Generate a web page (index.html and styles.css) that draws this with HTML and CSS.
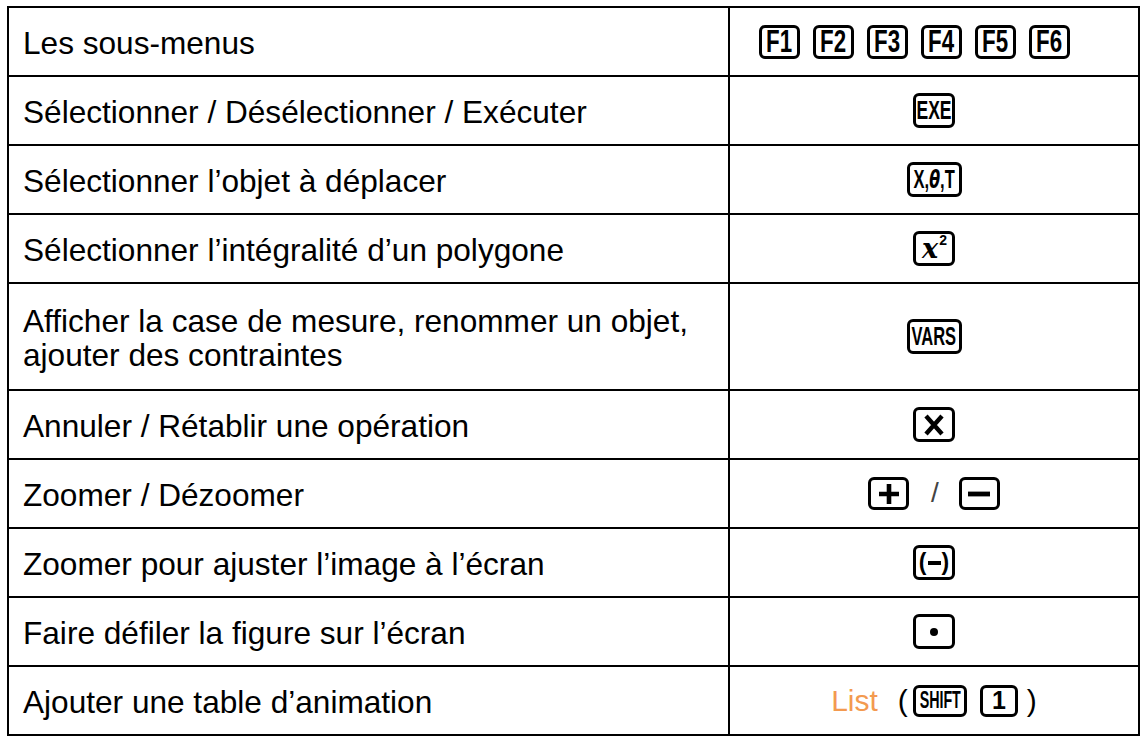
FILE: index.html
```html
<!DOCTYPE html>
<html lang="fr">
<head>
<meta charset="utf-8">
<title>Touches</title>
<link rel="stylesheet" href="styles.css">
</head>
<body>
<div class="table">
  <div class="cell label">Les sous-menus</div>
  <div class="cell keys">
    <div class="fgroup">
      <span class="key fkey"><span class="kt">F1</span></span>
      <span class="key fkey"><span class="kt">F2</span></span>
      <span class="key fkey"><span class="kt">F3</span></span>
      <span class="key fkey"><span class="kt">F4</span></span>
      <span class="key fkey"><span class="kt">F5</span></span>
      <span class="key fkey"><span class="kt">F6</span></span>
    </div>
  </div>

  <div class="cell label">Sélectionner / Désélectionner / Exécuter</div>
  <div class="cell keys"><span class="key small"><span class="kt">EXE</span></span></div>

  <div class="cell label">Sélectionner l’objet à déplacer</div>
  <div class="cell keys"><span class="key wide"><span class="kt">X,<i class="theta">θ</i>,T</span></span></div>

  <div class="cell label">Sélectionner l’intégralité d’un polygone</div>
  <div class="cell keys"><span class="key small"><span class="xsq"><i>x</i><sup>2</sup></span></span></div>

  <div class="cell label tall">Afficher la case de mesure, renommer un objet,<br>ajouter des contraintes</div>
  <div class="cell keys tall"><span class="key wide"><span class="kt">VARS</span></span></div>

  <div class="cell label">Annuler / Rétablir une opération</div>
  <div class="cell keys"><span class="key small">
    <svg width="26" height="24" viewBox="0 0 26 24"><path d="M5 3 L21 21 M21 3 L5 21" stroke="#000" stroke-width="4.4" stroke-linecap="butt"/></svg>
  </span></div>

  <div class="cell label">Zoomer / Dézoomer</div>
  <div class="cell keys pm">
    <span class="key small">
      <svg width="26" height="24" viewBox="0 0 26 24"><path d="M3 12 H23 M13 2 V22" stroke="#000" stroke-width="4.6"/></svg>
    </span>
    <span class="slash">/</span>
    <span class="key small">
      <svg width="28" height="24" viewBox="0 0 28 24"><path d="M3 12 H25" stroke="#000" stroke-width="4.8"/></svg>
    </span>
  </div>

  <div class="cell label">Zoomer pour ajuster l’image à l’écran</div>
  <div class="cell keys"><span class="key small"><span class="neg">(<span class="bar"></span>)</span></span></div>

  <div class="cell label">Faire défiler la figure sur l’écran</div>
  <div class="cell keys"><span class="key small"><span class="dot"></span></span></div>

  <div class="cell label">Ajouter une table d’animation</div>
  <div class="cell keys list">
    <span class="orange">List</span>
    <span class="paren open">(</span>
    <span class="key shift"><span class="kt">SHIFT</span></span>
    <span class="key one"><span class="kt">1</span></span>
    <span class="paren">)</span>
  </div>
</div>
</body>
</html>
```

FILE: styles.css
```css
html, body {
  margin: 0;
  padding: 0;
  background: #fff;
}

body {
  padding: 6px 0 0 7px;
  font-family: "Liberation Sans", Arial, sans-serif;
  color: #000;
}

.table {
  display: grid;
  grid-template-columns: 721px 410px;
  grid-template-rows: repeat(4, 69px) 107px repeat(5, 69px);
  border-left: 2px solid #000;
  border-top: 2px solid #000;
  width: 1131px;
}

.cell {
  box-sizing: border-box;
  border-right: 2px solid #000;
  border-bottom: 2px solid #000;
  display: flex;
  align-items: center;
}

.label {
  padding-left: 14px;
  font-size: 31.6px;
  line-height: 34px;
  padding-top: 2px;
}

.keys {
  justify-content: center;
}

.fgroup {
  display: flex;
  gap: 13px;
  margin-right: 40px;
}

.key {
  box-sizing: border-box;
  display: inline-flex;
  align-items: center;
  justify-content: center;
  border: 3px solid #000;
  border-radius: 6px;
  height: 35px;
  background: #fff;
}

.kt {
  display: inline-block;
  font-weight: bold;
  font-size: 25px;
  transform: scaleX(0.7);
  white-space: nowrap;
  line-height: 1;
}

.fkey {
  width: 41px;
  height: 34px;
}

.fkey .kt {
  font-size: 31px;
  transform: scaleX(0.72);
}

.small {
  width: 42px;
}

.wide {
  width: 55px;
}

.wide .kt {
  transform: scaleX(0.66);
}

.theta {
  font-style: italic;
  font-family: "DejaVu Sans", sans-serif;
  font-size: 24px;
}

.xsq {
  font-family: "DejaVu Serif", "Liberation Serif", serif;
  display: inline-flex;
  align-items: flex-start;
  margin-left: 1px;
}

.xsq i {
  font-size: 27px;
  line-height: 1;
  font-weight: bold;
}

.xsq sup {
  font-family: "Liberation Sans", sans-serif;
  font-weight: bold;
  font-size: 14px;
  line-height: 1;
  vertical-align: baseline;
  margin-left: 1px;
  margin-top: -2px;
}

.pm .key {
  width: 41px;
  height: 33px;
}

.slash {
  font-size: 28px;
  color: #444;
  margin: 0 20px 0 22px;
  padding-bottom: 2px;
}

.neg {
  display: inline-flex;
  align-items: center;
  font-weight: bold;
  font-size: 23px;
  line-height: 1;
}

.bar {
  display: inline-block;
  width: 13px;
  height: 4px;
  background: #000;
  margin: 0 1px;
}

.dot {
  width: 8px;
  height: 8px;
  border-radius: 50%;
  background: #000;
}

.list {
  font-size: 30px;
}

.orange {
  color: #f39a50;
  margin-right: 20px;
}

.paren {
  font-size: 30px;
}

.open {
  margin-right: 5px;
}

.shift {
  width: 54px;
  height: 32px;
  margin-right: 13px;
}

.shift .kt {
  font-size: 23px;
  transform: scaleX(0.62);
}

.one {
  width: 38px;
  height: 32px;
  margin-right: 9px;
}

.one .kt {
  font-size: 25px;
  transform: none;
}
```
